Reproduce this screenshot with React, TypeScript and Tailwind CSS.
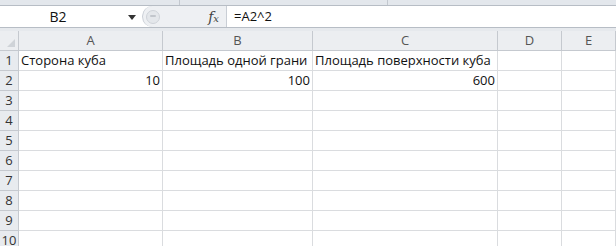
import React from "react";

const cols = ["A", "B", "C", "D", "E"];

const rows: string[][] = [
  ["Сторона куба", "Площадь одной грани", "Площадь поверхности куба", "", ""],
  ["10", "100", "600", "", ""],
  ["", "", "", "", ""],
  ["", "", "", "", ""],
  ["", "", "", "", ""],
  ["", "", "", "", ""],
  ["", "", "", "", ""],
  ["", "", "", "", ""],
  ["", "", "", "", ""],
  ["", "", "", "", ""],
];

export default function App() {
  return (
    <div className="w-[616px] h-[246px] overflow-hidden bg-white text-[#111] font-['Open_Sans',sans-serif]">
      {/* верхняя полоса ленты */}
      <div className="h-[5px] bg-[#e3e7ec] flex">
        <div className="w-[180px] border-r border-[#c3c8cf]" />
        <div className="w-[208px] border-r border-[#c3c8cf]" />
      </div>
      {/* строка формул */}
      <div className="h-[23px] flex border-y border-[#b7bdc5] bg-white">
        <div className="w-[142px] flex items-center relative">
          <span className="flex-1 text-center text-[14px] pr-[26px]">B2</span>
          <svg width="8" height="5" viewBox="0 0 8 5" className="absolute left-[128px] top-[9px]">
            <path d="M0 0 H8 L4 5 Z" fill="#333" />
          </svg>
        </div>
        <div className="w-[84px] flex items-center bg-[#eef0f3] rounded-l-[11px] border-l border-[#c9ced5] relative">
          <svg width="16" height="16" viewBox="0 0 16 16" className="ml-[2px]">
            <circle cx="8" cy="8" r="6.5" fill="#e4e7eb" stroke="#cfd3d9" />
            <rect x="5" y="6" width="6" height="2" rx="1" fill="#c2c6cc" />
          </svg>
          <span className="ml-auto mr-[7px] font-['DejaVu_Serif',serif] italic text-[14px] text-[#444] leading-none">
            f<span className="text-[10px]">x</span>
          </span>
        </div>
        <div className="flex-1 flex items-center border-l border-[#c9ced5] pl-[7px] text-[13px]">=A2^2</div>
      </div>
      <div className="h-[3px] bg-[#e6e9ed]" />
      {/* лист */}
      <div className="grid grid-cols-[19px_144px_150px_185px_64px_1fr] text-[13px] leading-[19px]">
        <div className="h-[20px] bg-[#eceef1] border-r border-b border-[#c5c9cf] relative">
          <svg width="8" height="8" viewBox="0 0 8 8" className="absolute right-[3px] bottom-[3px]">
            <path d="M8 0 V8 H0 Z" fill="#cfd3d8" />
          </svg>
        </div>
        {cols.map((c) => (
          <div
            key={c}
            className="h-[20px] bg-[#eceef1] border-r border-b border-[#c5c9cf] text-center text-[#555]"
          >
            {c}
          </div>
        ))}
        {rows.map((r, i) => (
          <React.Fragment key={i}>
            <div className="h-[20px] bg-[#e8ebef] border-r border-b border-[#c5c9cf] text-center text-[#333]">
              {i + 1}
            </div>
            {r.map((v, j) => {
              const num = v !== "" && !isNaN(Number(v));
              return (
                <div
                  key={j}
                  className={
                    "h-[20px] border-r border-b border-[#dadcdf] px-[2px] whitespace-nowrap " +
                    (num ? "text-right" : "text-left")
                  }
                >
                  {v}
                </div>
              );
            })}
          </React.Fragment>
        ))}
      </div>
    </div>
  );
}
